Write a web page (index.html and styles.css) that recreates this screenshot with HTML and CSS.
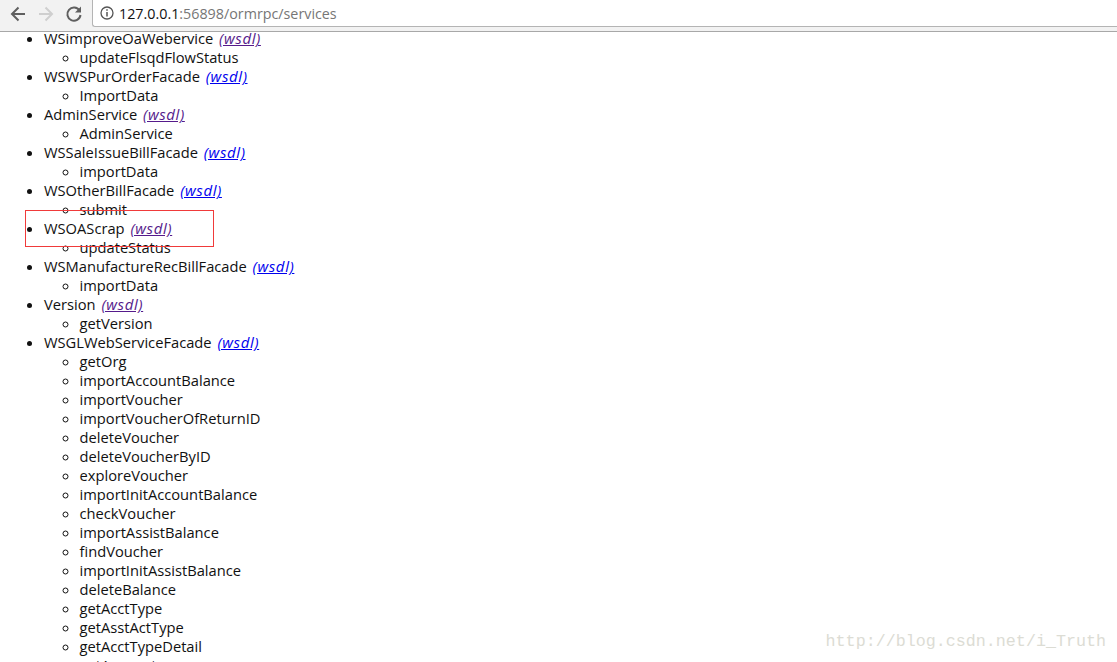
FILE: index.html
```html
<!DOCTYPE html>
<html lang="en">
<head>
<meta charset="utf-8">
<title>Services</title>
<link rel="stylesheet" href="styles.css">
</head>
<body>
<div class="browser">
  <header class="toolbar">
    <button class="nav" aria-label="Back"><svg width="18" height="18" viewBox="0 0 18 18"><path d="M16 9H3.500M9.500 2.500L3 9l6.500 6.500" fill="none" stroke="#5f5f5f" stroke-width="2"/></svg></button>
    <button class="nav" aria-label="Forward"><svg width="18" height="18" viewBox="0 0 18 18"><path d="M2 9h12.500M8.500 2.500L15 9l-6.500 6.500" fill="none" stroke="#cfcfcf" stroke-width="2"/></svg></button>
    <button class="nav" aria-label="Reload"><svg width="18" height="18" viewBox="0 0 18 18"><path d="M14.500 5.500A6.600 6.600 0 1 0 15.500 10" fill="none" stroke="#5f5f5f" stroke-width="2"/><path d="M16 1.500V7.500H10z" fill="#5f5f5f"/></svg></button>
    <div class="omnibox">
      <svg class="info" width="14" height="14" viewBox="0 0 14 14"><circle cx="7" cy="7" r="6" fill="none" stroke="#555" stroke-width="1.300"/><path d="M7 6v4.500M7 3.300v1.500" stroke="#555" stroke-width="1.500"/></svg>
      <span class="url"><span class="host">127.0.0.1</span>:56898/ormrpc/services</span>
    </div>
  </header>
  <main class="page">
    <ul class="services">
      <li>WSimproveOaWebervice <a class="visited" href="#">(wsdl)</a><ul><li>updateFlsqdFlowStatus</li></ul></li>
      <li>WSWSPurOrderFacade <a href="#">(wsdl)</a><ul><li>ImportData</li></ul></li>
      <li>AdminService <a class="visited" href="#">(wsdl)</a><ul><li>AdminService</li></ul></li>
      <li>WSSaleIssueBillFacade <a href="#">(wsdl)</a><ul><li>importData</li></ul></li>
      <li>WSOtherBillFacade <a href="#">(wsdl)</a><ul><li>submit</li></ul></li>
      <li>WSOAScrap <a class="visited" href="#">(wsdl)</a><ul><li>updateStatus</li></ul></li>
      <li>WSManufactureRecBillFacade <a href="#">(wsdl)</a><ul><li>importData</li></ul></li>
      <li>Version <a class="visited" href="#">(wsdl)</a><ul><li>getVersion</li></ul></li>
      <li>WSGLWebServiceFacade <a href="#">(wsdl)</a>
        <ul>
          <li>getOrg</li>
          <li>importAccountBalance</li>
          <li>importVoucher</li>
          <li>importVoucherOfReturnID</li>
          <li>deleteVoucher</li>
          <li>deleteVoucherByID</li>
          <li>exploreVoucher</li>
          <li>importInitAccountBalance</li>
          <li>checkVoucher</li>
          <li>importAssistBalance</li>
          <li>findVoucher</li>
          <li>importInitAssistBalance</li>
          <li>deleteBalance</li>
          <li>getAcctType</li>
          <li>getAsstActType</li>
          <li>getAcctTypeDetail</li>
          <li>getAccount</li>
        </ul>
      </li>
    </ul>
  </main>
  <div class="annotation"></div>
  <div class="watermark">http://blog.csdn.net/i_Truth</div>
</div>
</body>
</html>
```

FILE: styles.css
```css
* { box-sizing: border-box; }
html, body { margin: 0; padding: 0; height: 100%; background: #fff; overflow: hidden; }
.browser { position: relative; width: 1117px; height: 662px; display: flex; flex-direction: column; overflow: hidden; }
.toolbar { flex: none; height: 32px; display: flex; align-items: flex-start; background: #f2f2f2; border-bottom: 1px solid #a8a8a8; padding-left: 4px; position: relative; z-index: 1; }
.nav { width: 28px; height: 27px; border: 0; padding: 0; background: none; display: flex; align-items: center; justify-content: center; }
.omnibox { flex: 1; height: 27px; margin-left: 4px; background: #fff; border: 1px solid #b4b4b4; border-top: 0; border-right: 0; border-radius: 0 0 0 3px; display: flex; align-items: center; padding-left: 7px; gap: 5px; }
.url { font: 14.3px "Open Sans", "Liberation Sans", sans-serif; color: #767676; white-space: nowrap; }
.host { color: #111; }
.page { flex: 1; min-height: 0; overflow: hidden; font: 14.7px/19px "Open Sans", "Noto Sans", sans-serif; color: #111; }
.services { margin: -3px 0 0; padding: 0 0 0 44px; list-style: disc; }
.services ul { margin: 0; padding: 0 0 0 35.500px; list-style: circle; }
a { margin-left: 2px; color: #0000ee; font-size: 15px; letter-spacing: 0.600px; line-height: 1; font-style: italic; text-decoration: underline; }
a.visited { color: #551a8b; }
.annotation { position: absolute; left: 25px; top: 210px; width: 189px; height: 37px; border: 1px solid #f03a3a; }
.watermark { position: absolute; right: 11px; top: 632px; font: 16.7px/20px "Liberation Mono", "DejaVu Sans Mono", monospace; color: #dcdcd4; white-space: nowrap; }
```
